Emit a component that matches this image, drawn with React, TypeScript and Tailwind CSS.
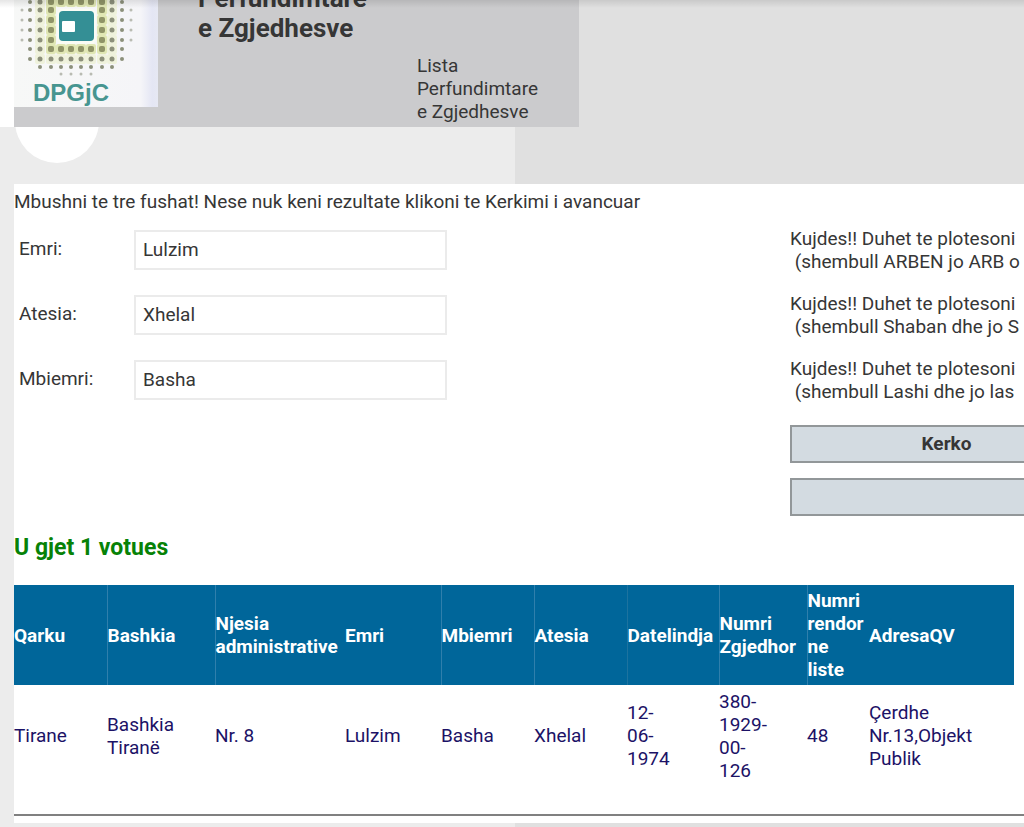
import React, { useState } from "react";

const fields = [
  {
    id: "emri",
    label: "Emri:",
    value: "Lulzim",
    hint: "(shembull ARBEN jo ARB o",
  },
  {
    id: "atesia",
    label: "Atesia:",
    value: "Xhelal",
    hint: "(shembull Shaban dhe jo S",
  },
  {
    id: "mbiemri",
    label: "Mbiemri:",
    value: "Basha",
    hint: "(shembull Lashi dhe jo las",
  },
];

const columns = [
  { title: "Qarku", className: "w-[9.3%]" },
  { title: "Bashkia", className: "w-[10.8%] border-l border-[#2f7fac]" },
  { title: "Njesia administrative", className: "w-[13%] border-l border-[#2f7fac]" },
  { title: "Emri", className: "w-[9.6%]" },
  { title: "Mbiemri", className: "w-[9.3%] border-l border-[#2f7fac]" },
  { title: "Atesia", className: "w-[9.3%] border-l border-[#2f7fac]" },
  { title: "Datelindja", className: "w-[9.2%] border-l border-[#1d739f]" },
  { title: "Numri Zgjedhor", className: "w-[8.8%] border-l border-[#2f7fac]" },
  { title: "Numri rendor ne liste", className: "w-[6.2%] border-l border-[#2f7fac]" },
  { title: "AdresaQV", className: "w-[14.5%]" },
];

const voters = [
  [
    "Tirane",
    "Bashkia Tiranë",
    "Nr. 8",
    "Lulzim",
    "Basha",
    "Xhelal",
    "12-\n06-\n1974",
    "380-\n1929-\n00-\n126",
    "48",
    "Çerdhe Nr.13,Objekt Publik",
  ],
];

// dot columns and rows of the emblem
const dotX = [8, 16, 26, 37, 47, 57, 67, 77, 88, 98, 108, 117];
const dotRows = [
  { y: 2, from: 1, to: 10 },
  { y: 10, from: 0, to: 11 },
  { y: 20, from: 0, to: 11 },
  { y: 30, from: 0, to: 11 },
  { y: 40, from: 0, to: 11 },
  { y: 49, from: 1, to: 10 },
  { y: 59, from: 1, to: 10 },
  { y: 67, from: 2, to: 9 },
  { y: 74, from: 4, to: 7 },
];

function dotSize(i: number, y: number) {
  if (y === 74) return 3;
  if (i === 0 || i === 11) return 3;
  if (i === 1 || i === 10 || y === 67) return 4;
  if (i === 2 || i === 9 || y === 59) return 5;
  return 6;
}

function Logo() {
  return (
    <svg className="h-[107px] w-36 shrink-0" viewBox="0 0 144 107" role="img" aria-label="DPGjC">
      <defs>
        <linearGradient id="paper" x1="0" x2="1" y1="0" y2="0">
          <stop offset="0" stopColor="#f7f8f7" />
          <stop offset="0.88" stopColor="#f5f5f8" />
          <stop offset="0.96" stopColor="#e4e6f4" />
          <stop offset="1" stopColor="#e6e8f3" />
        </linearGradient>
      </defs>
      <rect width="144" height="107" fill="url(#paper)" />
      {dotRows.map((row) =>
        dotX.map((x, i) => {
          if (i < row.from || i > row.to) return null;
          if (i > 3 && i < 8 && row.y > 5 && row.y < 45) return null;
          const size = dotSize(i, row.y);
          return (
            <g key={`${x}-${row.y}`}>
              {size > 4 && (
                <rect x={x - 5} y={row.y - 5} width="10" height="10" rx="2" fill={size === 6 ? "#e0e7b4" : "#eff2dc"} />
              )}
              <rect
                x={x - size / 2}
                y={row.y - size / 2}
                width={size}
                height={size}
                rx={size === 6 ? 2 : size / 2}
                fill={size === 6 ? "#8f9468" : size > 3 ? "#8c907b" : "#b9bbb2"}
              />
            </g>
          );
        })
      )}
      <rect x="43" y="9" width="39" height="35" rx="5" fill="#fafcf5" />
      <rect x="45" y="11" width="35" height="30" rx="4" fill="#348f95" />
      <rect x="48" y="21" width="13" height="11" rx="1" fill="#fff" />
      <text x="19" y="101" fontSize="24" fontWeight="700" fontFamily="'Liberation Sans', Arial, sans-serif" fill="#479590">
        DPGjC
      </text>
    </svg>
  );
}

function Header() {
  return (
    <header className="flex h-[127px] overflow-hidden bg-[#e0e0e0]">
      <div className="w-3.5 shrink-0 bg-white" />
      <div className="flex w-[565px] bg-[#cbcbcd]">
        <Logo />
        <h1 className="-mt-[17px] ml-10 w-[219px] text-[26px] leading-[30px] font-bold">
          Perfundimtare
          <br />e Zgjedhesve
        </h1>
        <p className="mt-[54px] leading-[23px]">
          Lista
          <br />
          Perfundimtare
          <br />e Zgjedhesve
        </p>
      </div>
    </header>
  );
}

function SearchForm() {
  const [values, setValues] = useState(fields.map((field) => field.value));

  return (
    <form className="overflow-hidden" onSubmit={(e) => e.preventDefault()}>
      {fields.map((field, i) => (
        <div key={field.id} className="flex h-[65px] items-center">
          <label htmlFor={field.id} className="w-[120px] pl-[5px]">
            {field.label}
          </label>
          <div className="flex flex-1">
            <input
              id={field.id}
              type="text"
              value={values[i]}
              onChange={(e) => setValues(values.map((v, j) => (j === i ? e.target.value : v)))}
              className="h-10 w-[313px] border-2 border-[#ebebeb] bg-white px-[7px]"
            />
          </div>
          <p className="w-[234px] leading-[23px] whitespace-nowrap">
            Kujdes!! Duhet te plotesoni
            <br />
            &nbsp;{field.hint}
          </p>
        </div>
      ))}
      <div className="mt-[13px] ml-auto flex w-[234px] flex-col gap-[15px]">
        <button type="submit" className="h-[38px] w-[313px] border-2 border-[#929799] bg-[#d3dbe1] font-bold">
          Kerko
        </button>
        <button
          type="button"
          aria-label="Kerkimi i avancuar"
          className="h-[38px] w-[313px] border-2 border-[#929799] bg-[#d3dbe1]"
        />
      </div>
    </form>
  );
}

function Results() {
  return (
    <section>
      <h2 className="mt-[17px] text-[23px] leading-[30px] font-bold text-[#078207]">U gjet 1 votues</h2>
      <div className="mt-[22px] pr-2.5">
        <table className="w-full table-fixed text-left leading-[23px]">
          <thead>
            <tr className="h-[100px] bg-[#00669a] text-white">
              {columns.map((column) => (
                <th key={column.title} className={column.className}>
                  {column.title}
                </th>
              ))}
            </tr>
          </thead>
          <tbody>
            {voters.map((voter, i) => (
              <tr key={i} className="h-[101px] text-[#1c1266]">
                {voter.map((cell, j) => (
                  <td key={j} className="whitespace-pre-line">
                    {cell}
                  </td>
                ))}
              </tr>
            ))}
          </tbody>
        </table>
      </div>
      <hr className="mt-7 border-t-2 border-[#808080]" />
    </section>
  );
}

export default function App() {
  return (
    <div className="relative overflow-hidden bg-[linear-gradient(to_right,#ececec_515px,#e0e0e0_515px)] font-[Roboto,sans-serif] text-[19px] text-[#363636]">
      <Header />
      <div className="flex h-[57px] overflow-hidden pl-[15px]">
        <div className="-mt-12 size-[84px] rounded-full bg-white" />
      </div>
      <div className="bg-[#ececec] pl-3.5">
        <main className="bg-white pt-[6px] pb-[7px]">
          <p className="mb-1 leading-[23px]">
            Mbushni te tre fushat! Nese nuk keni rezultate klikoni te Kerkimi i avancuar
          </p>
          <SearchForm />
          <Results />
        </main>
      </div>
      <div className="h-1" />
      <div className="absolute inset-x-0 top-0 h-2 bg-linear-to-b from-black/10 to-transparent" />
    </div>
  );
}
